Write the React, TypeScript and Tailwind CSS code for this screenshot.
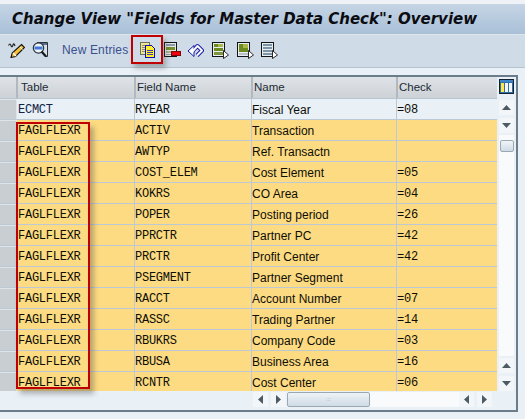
import React from 'react';

const rows = [
  ['ECMCT', 'RYEAR', 'Fiscal Year', '=08'],
  ['FAGLFLEXR', 'ACTIV', 'Transaction', ''],
  ['FAGLFLEXR', 'AWTYP', 'Ref. Transactn', ''],
  ['FAGLFLEXR', 'COST_ELEM', 'Cost Element', '=05'],
  ['FAGLFLEXR', 'KOKRS', 'CO Area', '=04'],
  ['FAGLFLEXR', 'POPER', 'Posting period', '=26'],
  ['FAGLFLEXR', 'PPRCTR', 'Partner PC', '=42'],
  ['FAGLFLEXR', 'PRCTR', 'Profit Center', '=42'],
  ['FAGLFLEXR', 'PSEGMENT', 'Partner Segment', ''],
  ['FAGLFLEXR', 'RACCT', 'Account Number', '=07'],
  ['FAGLFLEXR', 'RASSC', 'Trading Partner', '=14'],
  ['FAGLFLEXR', 'RBUKRS', 'Company Code', '=03'],
  ['FAGLFLEXR', 'RBUSA', 'Business Area', '=16'],
  ['FAGLFLEXR', 'RCNTR', 'Cost Center', '=06'],
];

const sans = "font-['Liberation_Sans',sans-serif]";
const mono = "font-['Liberation_Mono',monospace]";

function Pencil() {
  return (
    <svg width="17" height="16" viewBox="0 0 17 16">
      <path d="M0.5 3.5c1-2 2-2 2.5 0s1.5 1.5 2-0.5 1.5-1 2 1" fill="none" stroke="#222" strokeWidth="1.1" />
      <path d="M13.5 2.5l3 3-9 9-4.5 1 1.2-4.5z" fill="#f6c23c" stroke="#111" strokeWidth="1.1" />
      <path d="M5 11l3 3" stroke="#fff" strokeWidth="1.2" />
      <path d="M12 5l2.5 2.5" stroke="#fff" strokeWidth="1" />
    </svg>
  );
}

function Search() {
  return (
    <svg width="16" height="16" viewBox="0 0 16 16">
      <path d="M5 .5h10.5v14H13" fill="#d9e2ea" stroke="#2a3036" />
      <rect x="6" y="1" width="9" height="2" fill="#54708c" />
      <circle cx="6.5" cy="6" r="5.2" fill="#eef3f8" stroke="#2a3340" strokeWidth="1.2" />
      <path d="M2.5 4.5h8v3h-8z" fill="#3f78d8" />
      <path d="M9.5 9.5l4.5 5" stroke="#15181c" strokeWidth="2.2" />
    </svg>
  );
}

function Copy() {
  return (
    <svg width="16" height="16" viewBox="0 0 16 16" shapeRendering="crispEdges">
      <rect x="0.5" y="0.5" width="9" height="12" fill="#f2e68a" stroke="#707060" />
      <path d="M2 3h6M2 5h6M2 7h6M2 9h6" stroke="#8a8a70" />
      <path d="M5.5 3.5h6l3 3v9h-9z" fill="#ffee30" stroke="#1010b8" />
      <path d="M7 8.5h6M7 10.5h6M7 12.5h6" stroke="#3a3ac0" />
    </svg>
  );
}

function Delete() {
  return (
    <svg width="17" height="16" viewBox="0 0 17 16" shapeRendering="crispEdges">
      <rect x="0.5" y="0.5" width="12" height="14" fill="#e4e8ea" stroke="#141414" />
      <rect x="2" y="2" width="9" height="2" fill="#8a9aa6" />
      <rect x="2" y="5" width="9" height="3" fill="#76902c" />
      <rect x="2" y="9" width="9" height="2" fill="#a8b48a" />
      <rect x="2" y="12" width="9" height="1" fill="#8a9aa6" />
      <rect x="7" y="9" width="10" height="5" fill="#800808" />
      <rect x="8" y="10" width="8" height="3" fill="#ee0010" />
    </svg>
  );
}

// band drawn twice, blue under white, so it reads as an outlined return arrow
function Undo() {
  return (
    <svg width="17" height="16" viewBox="0 0 17 16">
      <path d="M5 9.5L10.5 4 15 8.5 10 13.5" fill="none" stroke="#1818a8" strokeWidth="4" strokeLinejoin="round" />
      <path d="M1 9l6-5.5V14.5z" fill="#fbfcfd" stroke="#1818a8" strokeWidth="1" strokeLinejoin="round" />
      <path d="M5.5 9.5L10.5 4 15 8.5 10 13.5" fill="none" stroke="#fbfcfd" strokeWidth="2" strokeLinejoin="round" />
    </svg>
  );
}

function DocArrow({ variant }: { variant: 'list' | 'block' | 'gray' }) {
  return (
    <svg width="17" height="17" viewBox="0 0 17 17" shapeRendering="crispEdges">
      <rect x="0.5" y="0.5" width="12" height="14" fill="#e8edf0" stroke="#141414" />
      {variant === 'list' && (
        <>
          <rect x="2" y="2" width="9" height="3" fill="#6d8a1e" />
          <rect x="2" y="6" width="9" height="3" fill="#6d8a1e" />
          <rect x="2" y="10" width="9" height="3" fill="#7f9440" />
          <rect x="6" y="2" width="5" height="3" fill="#a8b84a" />
        </>
      )}
      {variant === 'block' && (
        <>
          <rect x="2" y="2" width="9" height="8" fill="#6d8a1e" />
          <rect x="6" y="2" width="5" height="4" fill="#a8b84a" />
          <rect x="2" y="11" width="9" height="2" fill="#b8c2c8" />
        </>
      )}
      {variant === 'gray' && (
        <>
          <rect x="2" y="2" width="9" height="2" fill="#7e95a6" />
          <rect x="2" y="5" width="9" height="2" fill="#7e95a6" />
          <rect x="2" y="8" width="9" height="2" fill="#7e95a6" />
          <rect x="2" y="11" width="9" height="2" fill="#7e95a6" />
        </>
      )}
      <path d="M11.5 8.5l5 4.5-5 3.5z" fill="#fff" stroke="#141414" strokeWidth="0.9" shapeRendering="auto" />
    </svg>
  );
}

function ScrollBtn({ dir }: { dir: 'up' | 'down' | 'left' | 'right' }) {
  const d = { up: 'M0 6L4.5 1 9 6z', down: 'M0 1h9L4.5 6z', left: 'M6 0v9L1 4.5z', right: 'M1 0v9l5-4.5z' }[dir];
  const vertical = dir === 'up' || dir === 'down';
  return (
    <div className="flex h-[15px] w-[15px] items-center justify-center bg-[#f3f6f9]">
      <svg width={vertical ? 9 : 7} height={vertical ? 7 : 9} viewBox={vertical ? '0 0 9 7' : '0 0 7 9'}>
        <path d={d} fill="#4c5a64" />
      </svg>
    </div>
  );
}

export default function App() {
  return (
    <div className={`relative flex h-[419px] w-[525px] flex-col overflow-hidden bg-[#e9f0f6] ${sans}`}>
      {/* Title bar */}
      <div className="h-[5px] border-b border-[#c8d4e0] bg-[#eef2f6]" />
      <div className="flex h-[30px] items-center border-b border-[#dfe7ee] bg-gradient-to-b from-[#c4d4e4] to-[#a9c0d8] pl-3">
        <span className="whitespace-nowrap font-['DejaVu_Sans',sans-serif] text-[15px] font-bold italic text-[#0b0b12]">
          Change View "Fields for Master Data Check": Overview
        </span>
      </div>

      {/* Toolbar */}
      <div className="flex h-[33px] items-center border-b border-[#b4c3d1] bg-[#cfdce7] pb-[2px] pl-2">
        <Pencil />
        <div className="ml-[7px] flex"><Search /></div>
        <span className="ml-[14px] w-[66px] whitespace-nowrap text-[12px] tracking-[0.15px] text-[#3b4f8f]">New Entries</span>
        <div className="ml-[12px] flex"><Copy /></div>
        <div className="ml-[8px] flex"><Delete /></div>
        <div className="ml-[6px] flex"><Undo /></div>
        <div className="ml-[8px] flex"><DocArrow variant="list" /></div>
        <div className="ml-[8px] flex"><DocArrow variant="block" /></div>
        <div className="ml-[7px] flex"><DocArrow variant="gray" /></div>
      </div>

      {/* Table frame */}
      <div className="mt-[7px] mr-[7px] flex h-[337px] flex-col border-t-2 border-r-2 border-b-2 border-[#6b7d8b] bg-[#e9f0f6]">
        <div className="flex">
          <div className="flex w-[497px] flex-col">
            {/* Header */}
            <div className="flex h-[22px] border-b border-[#b9c6d2] bg-gradient-to-b from-[#dfe3e7] to-[#cdd2d7] text-[11.5px] text-[#1c2a34]">
              <div className="w-[18px] border-r-2 border-[#b0b8c0]" />
              <div className="flex w-[118px] items-center border-r-2 border-[#b0b8c0] pt-[1px] pl-[3px]">Table</div>
              <div className="flex w-[117px] items-center border-r-2 border-[#b0b8c0] pt-[1px] pl-[1px]">Field Name</div>
              <div className="flex w-[145px] items-center border-r-2 border-[#b0b8c0] pt-[1px] pl-[1px]">Name</div>
              <div className="flex flex-1 items-center pt-[1px] pl-[1px]">Check</div>
            </div>
            {/* Rows, the last one is cut by the horizontal scrollbar */}
            <div className="h-[292px] overflow-hidden">
              {rows.map((r, i) => (
                <div key={i} className={`flex h-[21px] border-b border-[#bcc8d4] text-[#0e0e08] ${i === 0 ? 'bg-[#e9f0f6]' : 'bg-[#fddb82]'}`}>
                  <div className="w-[17px] border-r border-t border-[#dfe4e8] bg-[#c9ced3]" />
                  <div className={`flex w-[118px] items-center border-r border-[#bcc8d4] pt-[1px] pl-[1px] text-[12px] tracking-[-0.25px] ${mono} ${i === 0 ? 'text-[#10244a]' : ''}`}>{r[0]}</div>
                  <div className={`flex w-[117px] items-center border-r border-[#bcc8d4] pt-[1px] text-[12px] tracking-[-0.25px] ${mono}`}>{r[1]}</div>
                  <div className="flex w-[145px] items-center border-r border-[#bcc8d4] pt-[1px] text-[12px]">{r[2]}</div>
                  <div className={`flex flex-1 items-center pt-[1px] text-[12px] tracking-[-0.25px] ${mono}`}>{r[3]}</div>
                </div>
              ))}
            </div>
          </div>

          {/* Vertical scrollbar */}
          <div className="flex h-[314px] w-[19px] flex-col pl-[2px]">
            <svg width="15" height="15" viewBox="0 0 15 15" className="mt-[2px]" shapeRendering="crispEdges">
              <rect x="0.5" y="0.5" width="14" height="14" fill="#2f6fa8" stroke="#123" />
              <rect x="1" y="1" width="13" height="2" fill="#3c86c8" />
              <rect x="2" y="4" width="3" height="9" fill="#ffe840" />
              <rect x="6" y="4" width="3" height="9" fill="#f4f6f8" />
              <rect x="10" y="4" width="3" height="9" fill="#f4f6f8" />
            </svg>
            <div className="mt-[6px]"><ScrollBtn dir="up" /></div>
            <div className="mt-[3px]"><ScrollBtn dir="down" /></div>
            <div className="mt-[2px] flex w-[15px] flex-1 flex-col bg-[#f8fafc]">
              <div className="mt-[5px] ml-[1px] h-[12px] w-[14px] rounded-[2px] border border-[#9aa8b4] bg-gradient-to-b from-[#f0f4f8] to-[#d0dae4]" />
            </div>
            <div className="mt-[2px]"><ScrollBtn dir="up" /></div>
            <div className="mt-[3px]"><ScrollBtn dir="down" /></div>
          </div>
        </div>

        {/* Horizontal scrollbar */}
        <div className="mt-[1px] flex h-[15px] items-center pl-[253px]">
          <ScrollBtn dir="left" />
          <div className="ml-[3px]"><ScrollBtn dir="right" /></div>
          <div className="ml-[1px] flex h-[15px] w-[172px] bg-[#f8fafc]">
            <div className="flex h-[15px] w-[83px] items-center justify-center rounded-[2px] border border-[#9aa8b4] bg-gradient-to-b from-[#eef3f7] to-[#cfdbe6] text-[6px] leading-[3px] text-[#8a98a4]">
              :::
            </div>
          </div>
          <ScrollBtn dir="left" />
          <div className="ml-[3px]"><ScrollBtn dir="right" /></div>
        </div>
      </div>

      {/* Red highlight boxes */}
      <div className="absolute left-[131px] top-[35px] h-[29px] w-[32px] border-[2.5px] border-[#c00000] shadow-[3px_4px_5px_rgba(60,60,60,0.35)]" />
      <div className="absolute left-[16px] top-[122px] h-[267px] w-[74px] border-[2.5px] border-[#c00000] shadow-[4px_5px_5px_rgba(60,60,60,0.35)]" />
    </div>
  );
}
